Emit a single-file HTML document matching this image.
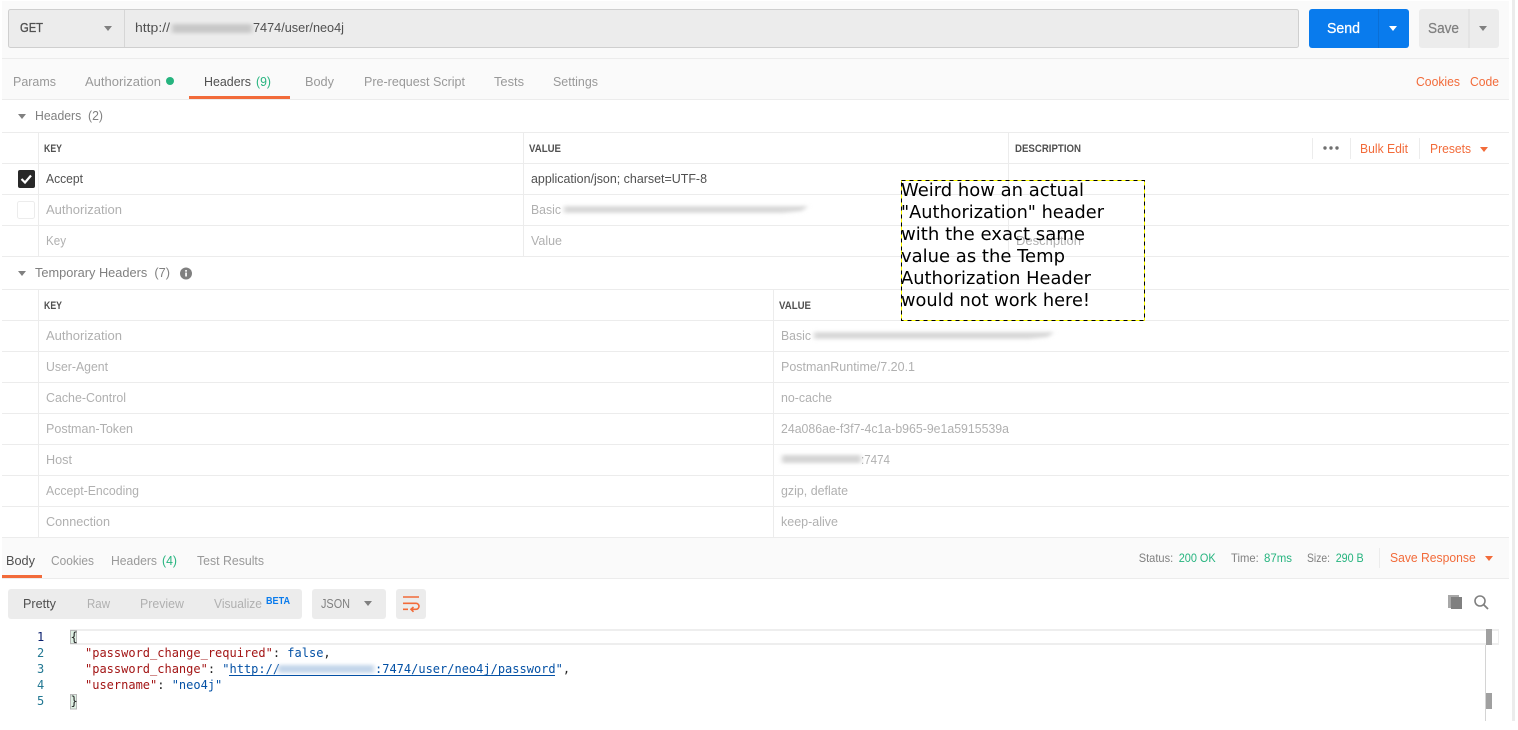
<!DOCTYPE html>
<html lang="en"><head><meta charset="utf-8"><title>Postman</title>
<style>
html,body{margin:0;padding:0;background:#fff;width:1518px;height:730px;overflow:hidden}
svg{display:block}
text{font-family:"Liberation Sans",sans-serif;font-size:13px;fill:#808080;white-space:pre}
.l{stroke:#ececec;stroke-width:1;shape-rendering:crispEdges}
.d{fill:#505050}.p{fill:#b0b0b0}.m{fill:#999}.o{fill:#f26b3a}.g{fill:#26b47f}
.h{font-size:11px;font-weight:bold;fill:#505050}
.c{font-family:"DejaVu Sans Mono",monospace;font-size:12px;fill:#222}
.n{fill:#237893}.s{fill:#a31515}.v{fill:#0451a5}
.a{font-family:"DejaVu Sans",sans-serif;font-size:18px;fill:#000}
.t{font-size:12px}
</style></head><body>
<svg width="1518" height="730" viewBox="0 0 1518 730" xmlns="http://www.w3.org/2000/svg">
<defs>
<filter id="b" x="-10%" y="-150%" width="120%" height="400%"><feGaussianBlur stdDeviation="2.5 1.8"/></filter>
</defs>

<!-- page chrome -->
<rect x="2" y="1" width="1507" height="98" fill="#fafafa"/>
<rect x="1512" y="0" width="3" height="721" fill="#ececec"/>
<line class="l" x1="2" x2="1509" y1="58.5" y2="58.5"/>
<line class="l" x1="2" x2="1509" y1="99.5" y2="99.5"/>

<!-- URL bar -->
<rect x="8.5" y="9.5" width="1290" height="38" rx="2" fill="#ececec" stroke="#cfcfcf"/>
<line x1="124.5" x2="124.5" y1="10" y2="47" stroke="#d6d6d6"/>
<text x="20" y="32" textLength="23" lengthAdjust="spacingAndGlyphs" style="font-size:13px;fill:#505050;stroke:#505050;stroke-width:.35px">GET</text>
<path d="M104 26h8l-4 5z" fill="#808080"/>
<text x="135" y="32" textLength="35" lengthAdjust="spacingAndGlyphs" class="d">http://</text>
<rect x="172" y="24" width="80" height="9" fill="#c8c8c8" filter="url(#b)"/>
<text x="253" y="32" textLength="91" lengthAdjust="spacingAndGlyphs" class="d">7474/user/neo4j</text>

<rect x="1309" y="9" width="100" height="39" rx="3" fill="#097bed"/>
<line x1="1378.5" x2="1378.5" y1="9" y2="48" stroke="#0a6fd6"/>
<text x="1327" y="33" textLength="33" lengthAdjust="spacingAndGlyphs" style="font-size:15px;fill:#fff;stroke:#fff;stroke-width:.25px">Send</text>
<path d="M1389 26h8l-4 5z" fill="#fff"/>
<rect x="1419" y="9" width="80" height="39" rx="3" fill="#ececec"/>
<line x1="1469" x2="1469" y1="9" y2="48" stroke="#dcdcdc"/>
<text x="1428" y="33" textLength="31" lengthAdjust="spacingAndGlyphs" style="font-size:15px;fill:#808080;stroke:#808080;stroke-width:.25px">Save</text>
<path d="M1479 26h8l-4 5z" fill="#808080"/>

<!-- request tabs -->
<text x="13" y="86" textLength="43" lengthAdjust="spacingAndGlyphs" class="m">Params</text>
<text x="85" y="86" textLength="76" lengthAdjust="spacingAndGlyphs" class="m">Authorization</text>
<circle cx="170" cy="81" r="4" fill="#26b47f"/>
<text x="204" y="86" textLength="47" lengthAdjust="spacingAndGlyphs" class="d">Headers</text>
<text x="256" y="86" textLength="15" lengthAdjust="spacingAndGlyphs" class="g">(9)</text>
<rect x="189" y="96" width="101" height="3" fill="#f26b3a"/>
<text x="305" y="86" textLength="29" lengthAdjust="spacingAndGlyphs" class="m">Body</text>
<text x="364" y="86" textLength="101" lengthAdjust="spacingAndGlyphs" class="m">Pre-request Script</text>
<text x="494" y="86" textLength="30" lengthAdjust="spacingAndGlyphs" class="m">Tests</text>
<text x="553" y="86" textLength="45" lengthAdjust="spacingAndGlyphs" class="m">Settings</text>
<text x="1416" y="86" textLength="44" lengthAdjust="spacingAndGlyphs" class="o">Cookies</text>
<text x="1470" y="86" textLength="29" lengthAdjust="spacingAndGlyphs" class="o">Code</text>

<!-- Headers section -->
<path d="M18 114h8l-4 5z" fill="#808080"/>
<text x="35" y="120" textLength="68" lengthAdjust="spacingAndGlyphs">Headers  (2)</text>
<line class="l" x1="2" x2="1509" y1="132.5" y2="132.5"/>
<line class="l" x1="2" x2="1509" y1="163.5" y2="163.5"/>
<line class="l" x1="2" x2="1509" y1="194.5" y2="194.5"/>
<line class="l" x1="2" x2="1509" y1="225.5" y2="225.5"/>
<line class="l" x1="2" x2="1509" y1="256.5" y2="256.5"/>
<line class="l" x1="38.5" x2="38.5" y1="132" y2="257"/>
<line class="l" x1="523.5" x2="523.5" y1="132" y2="257"/>
<line class="l" x1="1008.5" x2="1008.5" y1="132" y2="257"/>
<line class="l" x1="1312.5" x2="1312.5" y1="138" y2="159"/>
<line class="l" x1="1350.5" x2="1350.5" y1="138" y2="159"/>
<line class="l" x1="1419.5" x2="1419.5" y1="138" y2="159"/>
<text x="44" y="152" textLength="18" lengthAdjust="spacingAndGlyphs" class="h">KEY</text>
<text x="529" y="152" textLength="32" lengthAdjust="spacingAndGlyphs" class="h">VALUE</text>
<text x="1015" y="152" textLength="66" lengthAdjust="spacingAndGlyphs" class="h">DESCRIPTION</text>
<circle cx="1325" cy="148" r="1.7" fill="#707070"/><circle cx="1331" cy="148" r="1.7" fill="#707070"/><circle cx="1337" cy="148" r="1.7" fill="#707070"/>
<text x="1360" y="153" textLength="48" lengthAdjust="spacingAndGlyphs" class="o">Bulk Edit</text>
<text x="1430" y="153" textLength="41" lengthAdjust="spacingAndGlyphs" class="o">Presets</text>
<path d="M1480 147h8l-4 5z" fill="#f26b3a"/>

<rect x="18" y="170" width="17" height="18" rx="2" fill="#282828"/>
<path d="M21.500 179l3.500 3.500 6-7" fill="none" stroke="#fff" stroke-width="2.200"/>
<text x="46" y="183" textLength="37" lengthAdjust="spacingAndGlyphs" class="d">Accept</text>
<text x="531" y="183" textLength="176" lengthAdjust="spacingAndGlyphs" class="d">application/json; charset=UTF-8</text>
<rect x="17.500" y="201.500" width="17" height="17" rx="2" fill="#fff" stroke="#ececec"/>
<text x="46" y="214" textLength="76" lengthAdjust="spacingAndGlyphs" class="p">Authorization</text>
<text x="531" y="214" textLength="30" lengthAdjust="spacingAndGlyphs" class="p">Basic</text>
<path d="M564 206h244l-6 5-20 2-218 0z" fill="#d8d8d8" filter="url(#b)"/>
<text x="46" y="245" textLength="20" lengthAdjust="spacingAndGlyphs" class="p">Key</text>
<text x="531" y="245" textLength="31" lengthAdjust="spacingAndGlyphs" class="p">Value</text>
<text x="1016" y="245" textLength="65" lengthAdjust="spacingAndGlyphs" class="p">Description</text>

<!-- Temporary headers -->
<path d="M18 271h8l-4 5z" fill="#808080"/>
<text x="35" y="277" textLength="135" lengthAdjust="spacingAndGlyphs">Temporary Headers  (7)</text>
<circle cx="186" cy="273.500" r="6" fill="#808080"/>
<rect x="185.200" y="272.500" width="1.700" height="4" fill="#fff"/><rect x="185.200" y="270" width="1.700" height="1.700" fill="#fff"/>
<line class="l" x1="2" x2="1509" y1="289.5" y2="289.5"/>
<line class="l" x1="2" x2="1509" y1="320.5" y2="320.5"/>
<line class="l" x1="2" x2="1509" y1="351.5" y2="351.5"/>
<line class="l" x1="2" x2="1509" y1="382.5" y2="382.5"/>
<line class="l" x1="2" x2="1509" y1="413.5" y2="413.5"/>
<line class="l" x1="2" x2="1509" y1="444.5" y2="444.5"/>
<line class="l" x1="2" x2="1509" y1="475.5" y2="475.5"/>
<line class="l" x1="2" x2="1509" y1="506.5" y2="506.5"/>
<line class="l" x1="38.5" x2="38.5" y1="289" y2="538"/>
<line class="l" x1="773.5" x2="773.5" y1="289" y2="538"/>
<text x="44" y="309" textLength="18" lengthAdjust="spacingAndGlyphs" class="h">KEY</text>
<text x="779" y="309" textLength="32" lengthAdjust="spacingAndGlyphs" class="h">VALUE</text>
<text x="46" y="340" textLength="76" lengthAdjust="spacingAndGlyphs" class="p">Authorization</text>
<text x="781" y="340" textLength="30" lengthAdjust="spacingAndGlyphs" class="p">Basic</text>
<path d="M814 332h240l-6 5-20 2-214 0z" fill="#d8d8d8" filter="url(#b)"/>
<text x="46" y="371" textLength="62" lengthAdjust="spacingAndGlyphs" class="p">User-Agent</text>
<text x="781" y="371" textLength="134" lengthAdjust="spacingAndGlyphs" class="p">PostmanRuntime/7.20.1</text>
<text x="46" y="402" textLength="80" lengthAdjust="spacingAndGlyphs" class="p">Cache-Control</text>
<text x="781" y="402" textLength="51" lengthAdjust="spacingAndGlyphs" class="p">no-cache</text>
<text x="46" y="433" textLength="87" lengthAdjust="spacingAndGlyphs" class="p">Postman-Token</text>
<text x="781" y="433" textLength="228" lengthAdjust="spacingAndGlyphs" class="p">24a086ae-f3f7-4c1a-b965-9e1a5915539a</text>
<text x="46" y="464" textLength="26" lengthAdjust="spacingAndGlyphs" class="p">Host</text>
<rect x="782" y="455" width="79" height="8" fill="#d4d4d4" filter="url(#b)"/>
<text x="861" y="464" textLength="29" lengthAdjust="spacingAndGlyphs" class="p">:7474</text>
<text x="46" y="495" textLength="93" lengthAdjust="spacingAndGlyphs" class="p">Accept-Encoding</text>
<text x="781" y="495" textLength="67" lengthAdjust="spacingAndGlyphs" class="p">gzip, deflate</text>
<text x="46" y="526" textLength="64" lengthAdjust="spacingAndGlyphs" class="p">Connection</text>
<text x="781" y="526" textLength="57" lengthAdjust="spacingAndGlyphs" class="p">keep-alive</text>

<!-- Response tabs -->
<rect x="2" y="538" width="1507" height="40" fill="#fafafa"/>
<line class="l" x1="2" x2="1509" y1="578.5" y2="578.5"/>
<line class="l" x1="2" x2="1509" y1="537.5" y2="537.5"/>
<rect x="2" y="575" width="40" height="3" fill="#f26b3a"/>
<text x="6" y="565" textLength="29" lengthAdjust="spacingAndGlyphs" class="d">Body</text>
<text x="51" y="565" textLength="43" lengthAdjust="spacingAndGlyphs" class="m">Cookies</text>
<text x="111" y="565" textLength="46" lengthAdjust="spacingAndGlyphs" class="m">Headers</text>
<text x="162" y="565" textLength="15" lengthAdjust="spacingAndGlyphs" class="g">(4)</text>
<text x="197" y="565" textLength="67" lengthAdjust="spacingAndGlyphs" class="m">Test Results</text>
<text x="1138.700" y="562" textLength="34.500" lengthAdjust="spacingAndGlyphs" class="t">Status:</text>
<text x="1178.700" y="562" textLength="37" lengthAdjust="spacingAndGlyphs" class="t g">200 OK</text>
<text x="1231" y="562" textLength="27.700" lengthAdjust="spacingAndGlyphs" class="t">Time:</text>
<text x="1264" y="562" textLength="28" lengthAdjust="spacingAndGlyphs" class="t g">87ms</text>
<text x="1307" y="562" textLength="23" lengthAdjust="spacingAndGlyphs" class="t">Size:</text>
<text x="1335.700" y="562" textLength="28" lengthAdjust="spacingAndGlyphs" class="t g">290 B</text>
<line class="l" x1="1379.5" x2="1379.5" y1="548" y2="568"/>
<text x="1390" y="562" textLength="85.700" lengthAdjust="spacingAndGlyphs" class="o">Save Response</text>
<path d="M1485 556h8l-4 5z" fill="#f26b3a"/>

<!-- Response toolbar -->
<rect x="8" y="589" width="294" height="30" rx="3" fill="#ececec"/>
<text x="23" y="608" textLength="33" lengthAdjust="spacingAndGlyphs" class="d">Pretty</text>
<text x="87" y="608" textLength="23" lengthAdjust="spacingAndGlyphs" class="p">Raw</text>
<text x="140" y="608" textLength="44" lengthAdjust="spacingAndGlyphs" class="p">Preview</text>
<text x="214" y="608" textLength="48" lengthAdjust="spacingAndGlyphs" class="p">Visualize</text>
<text x="266" y="604" textLength="24" lengthAdjust="spacingAndGlyphs" style="font-size:10px;font-weight:bold;fill:#097bed">BETA</text>
<rect x="312" y="589" width="74" height="30" rx="3" fill="#ececec"/>
<text x="321" y="608" textLength="29" lengthAdjust="spacingAndGlyphs">JSON</text>
<path d="M364 601h8l-4 5z" fill="#808080"/>
<rect x="396" y="589" width="30" height="30" rx="3" fill="#ececec"/>
<path d="M403 597h16M403 603.300h13a3 3 0 0 1 0 6h-5M403 609.300h5M413.500 607l-2.500 2.300 2.500 2.500" fill="none" stroke="#f26b3a" stroke-width="1.600"/>
<path d="M1448 595h11v2h-8v11h-3z" fill="#a8a8a8"/>
<rect x="1451" y="597" width="11" height="12" fill="#808080"/>
<circle cx="1480" cy="601" r="5" fill="none" stroke="#808080" stroke-width="1.600"/>
<path d="M1483.500 604.500l4.500 4.500" stroke="#808080" stroke-width="1.800"/>

<!-- Code -->
<rect x="70" y="629" width="1429" height="2" fill="#eee"/>
<rect x="70" y="643" width="1429" height="2" fill="#eee"/>
<line x1="1498.500" x2="1498.500" y1="630" y2="644" stroke="#eee"/>
<rect x="1486" y="629" width="6" height="16" fill="#a0a0a0"/>
<line x1="1485.500" x2="1485.500" y1="645" y2="721" stroke="#d4d4d4"/>
<rect x="1486" y="693" width="6" height="16" fill="#a0a0a0"/>
<rect x="70.500" y="630.500" width="6" height="13" fill="#dff0e4" stroke="#b9b9b9"/>
<rect x="70.500" y="694.500" width="6" height="14.500" fill="#dff0e4" stroke="#b9b9b9"/>
<text x="37" y="641" class="c" style="fill:#0b216f">1</text>
<text x="37" y="657" class="c n">2</text>
<text x="37" y="673" class="c n">3</text>
<text x="37" y="689" class="c n">4</text>
<text x="37" y="705" class="c n">5</text>
<text x="70.500" y="641" class="c">{</text>
<text x="85" y="657" class="c"><tspan class="s">"password_change_required"</tspan>: <tspan class="v">false</tspan>,</text>
<text x="85" y="673" class="c"><tspan class="s">"password_change"</tspan>: <tspan class="v">"http://</tspan></text>
<rect x="278" y="665" width="96" height="8" fill="#c3d5ea" filter="url(#b)"/>
<text x="375" y="673" class="c"><tspan class="v">:7474/user/neo4j/password"</tspan>,</text>
<rect x="229" y="675" width="326" height="1" fill="#0451a5"/>
<text x="85" y="689" class="c"><tspan class="s">"username"</tspan>: <tspan class="v">"neo4j"</tspan></text>
<text x="70.500" y="705" class="c">}</text>

<!-- Annotation -->
<rect x="901.500" y="180.500" width="243" height="140" fill="none" stroke="#ffff00"/>
<rect x="901.500" y="180.500" width="243" height="140" fill="none" stroke="#000" stroke-dasharray="4 4"/>
<text class="a" x="901" y="196" textLength="183" lengthAdjust="spacingAndGlyphs">Weird how an actual</text>
<text class="a" x="901" y="218" textLength="203" lengthAdjust="spacingAndGlyphs">"Authorization" header</text>
<text class="a" x="901" y="240" textLength="184" lengthAdjust="spacingAndGlyphs">with the exact same</text>
<text class="a" x="901" y="262" textLength="164" lengthAdjust="spacingAndGlyphs">value as the Temp</text>
<text class="a" x="901" y="284" textLength="190" lengthAdjust="spacingAndGlyphs">Authorization Header</text>
<text class="a" x="901" y="306" textLength="189" lengthAdjust="spacingAndGlyphs">would not work here!</text>
</svg>
</body></html>
